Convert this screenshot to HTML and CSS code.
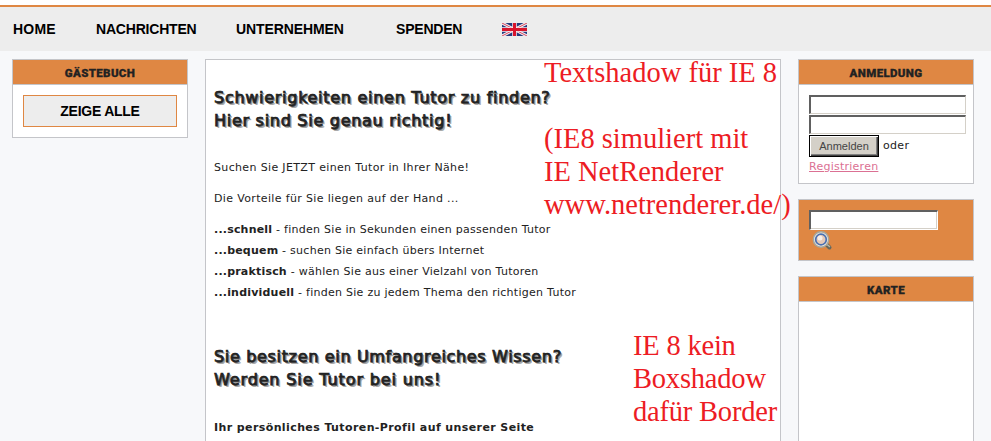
FILE: index.html
```html
<!DOCTYPE html>
<html lang="de">
<head>
<meta charset="utf-8">
<title>Tutor</title>
<link rel="stylesheet" href="styles.css">
</head>
<body>
<nav class="nav">
  <a class="home">HOME</a><a class="news">NACHRICHTEN</a><a class="company">UNTERNEHMEN</a><a class="donate">SPENDEN</a>
  <svg class="flag" width="25" height="13" viewBox="0 0 50 26">
    <rect width="50" height="26" fill="#253b7d"/>
    <path d="M0 0L50 26M50 0L0 26" stroke="#f4eef2" stroke-width="6"/>
    <path d="M0 0L50 26M50 0L0 26" stroke="#d8465c" stroke-width="2"/>
    <path d="M25 0V26M0 13H50" stroke="#fae9eb" stroke-width="9"/>
    <path d="M25 0V26M0 13H50" stroke="#d8142c" stroke-width="6"/>
  </svg>
</nav>
<div class="columns">
  <aside class="side">
    <section class="box guestbook">
      <h3>GÄSTEBUCH</h3>
      <a class="all">ZEIGE ALLE</a>
    </section>
  </aside>
  <main class="main">
    <h2>Schwierigkeiten einen Tutor zu finden?<br>Hier sind Sie genau richtig!</h2>
    <p class="first">Suchen Sie JETZT einen Tutor in Ihrer Nähe!</p>
    <p>Die Vorteile für Sie liegen auf der Hand ...</p>
    <ul>
      <li><b>...schnell</b> - finden Sie in Sekunden einen passenden Tutor</li>
      <li><b>...bequem</b> - suchen Sie einfach übers Internet</li>
      <li><b>...praktisch</b> - wählen Sie aus einer Vielzahl von Tutoren</li>
      <li><b>...individuell</b> - finden Sie zu jedem Thema den richtigen Tutor</li>
    </ul>
    <h2 class="second">Sie besitzen ein Umfangreiches Wissen?<br><span class="wide">Werden Sie Tutor bei uns!</span></h2>
    <p class="profile"><b>Ihr persönliches Tutoren-Profil auf unserer Seite</b></p>
    <div class="note note-text">Textshadow für IE 8<br><br>(IE8 simuliert mit<br>IE NetRenderer<br>www.netrenderer.de/)</div>
    <div class="note note-box">IE 8 kein<br>Boxshadow<br>dafür Border</div>
  </main>
  <aside class="side">
    <section class="box login">
      <h3>ANMELDUNG</h3>
      <form>
        <input type="text"><input type="password">
        <div class="row"><button type="button">Anmelden</button><span>oder</span></div>
        <a class="register">Registrieren</a>
      </form>
    </section>
    <section class="box search">
      <input type="text">
      <svg width="21" height="20" viewBox="0 0 21 20">
        <path d="M14.500 13.500L17.500 16.500" stroke="#66675d" stroke-width="4" stroke-linecap="round"/>
        <path d="M14.500 13L17.500 15.500" stroke="#b9b8a8" stroke-width="1.500" stroke-linecap="round"/>
        <circle cx="9" cy="8.500" r="7.700" fill="#e6e4df" stroke="#a8a69a" stroke-width="1.400"/>
        <circle cx="9" cy="8.500" r="5.300" fill="#e5c9b8" stroke="#4b70b0" stroke-width="1.700"/>
        <circle cx="8" cy="7" r="2.500" fill="#f7efea"/>
      </svg>
    </section>
    <section class="box map">
      <h3>KARTE</h3>
    </section>
  </aside>
</div>
</body>
</html>
```
FILE: styles.css
```css
* { box-sizing: border-box; }
body {
  display: flex;
  flex-direction: column;
  margin: 0;
  padding-top: 5px;
  height: 441px;
  overflow: hidden;
  background: linear-gradient(#fff 5px, #f7f8fa 5px);
  color: #222;
  font: 11px/21px "DejaVu Sans", Verdana, sans-serif;
}
.nav {
  display: flex;
  flex: none;
  height: 46px;
  padding-left: 13px;
  border-top: 2px solid #df8743;
  background: #ededed;
  color: #000;
  font: bold 14px/44px "Liberation Sans", Arial, sans-serif;
}
.home { width: 83px; letter-spacing: .2px; }
.news { width: 140px; letter-spacing: -.2px; }
.company { width: 160px; letter-spacing: -.1px; }
.donate { width: 106px; letter-spacing: -.2px; }
.flag { margin-top: 16px; }
.columns {
  display: grid;
  flex: 1;
  grid-template-columns: 176px 576px 176px;
  column-gap: 17px;
  padding: 8px 0 0 12px;
}
.side { display: flex; flex-direction: column; gap: 15px; }
.box, .main { border: 1px solid #c4c5c9; background: #fff; }
h3 {
  height: 25px;
  margin: 0;
  border-bottom: 1px solid #c4c5c9;
  background: #df8743;
  text-align: center;
  font: 900 11.5px/26px Roboto, sans-serif;
  letter-spacing: .35px;
  -webkit-text-stroke: .3px #222;
}
.guestbook { height: 79px; }
.all {
  display: block;
  height: 32px;
  margin: 10px;
  border: 1px solid #df8743;
  background: #ededed;
  color: #000;
  text-align: center;
  font: bold 14px/31px "Liberation Sans", Arial, sans-serif;
  letter-spacing: -.25px;
}
.main { position: relative; padding: 26px 8px 0; border-bottom: 0; }
h2 {
  margin: 0;
  font: 16px/23px "DejaVu Sans", Verdana, sans-serif;
  letter-spacing: .72px;
  -webkit-text-stroke: .75px #222;
  text-shadow: 1px 1px 0 #777, 2px 2px 0 #aaa;
  white-space: nowrap;
}
p { margin: 0 0 10px; letter-spacing: .35px; }
.first { margin-top: 25px; }
ul { margin: 0; padding: 0; list-style: none; letter-spacing: .27px; }
li b { letter-spacing: .2px; }
.second { margin-top: 42px; letter-spacing: .67px; }
.wide { letter-spacing: .87px; }
.profile { margin: 26px 0 0; letter-spacing: .4px; }
.note {
  position: absolute;
  color: #ed1c24;
  font: 28.5px/33px "Liberation Serif", "Times New Roman", serif;
  white-space: nowrap;
}
.note-text { left: 338px; top: -4px; }
.note-box { left: 427px; top: 269px; letter-spacing: -.2px; }
.login { height: 125px; }
form { padding: 10px 7px 0 10px; }
input {
  display: block;
  width: 157px;
  height: 19px;
  margin: 0 0 1px;
  padding: 0;
  border: solid;
  border-width: 2px 1px 1px 2px;
  border-color: #606060 #d4d0c8 #d4d0c8 #606060;
  background: #fff;
}
.row { display: flex; gap: 4px; height: 22px; letter-spacing: .3px; }
button {
  width: 70px;
  height: 22px;
  padding: 0;
  border: 1px solid #000;
  background: #d4d0c8;
  box-shadow: inset 1px 1px #fff, inset -1px -1px #404040, inset -2px -2px #808080;
  color: #444;
  font: 11px/18px "Liberation Sans", Arial, sans-serif;
}
.register { display: block; width: max-content; color: #db7093; line-height: 19px; letter-spacing: .25px; text-decoration: underline; }
.search { height: 62px; padding: 10px; background: #df8743; }
.search input { width: 129px; height: 20px; box-shadow: inset -1px -1px #d4d0c8; border-color: #606060 #fff #fff #606060; }
.search svg { display: block; margin-left: 3px; }
.map { flex: 1; border-bottom: 0; }
```
